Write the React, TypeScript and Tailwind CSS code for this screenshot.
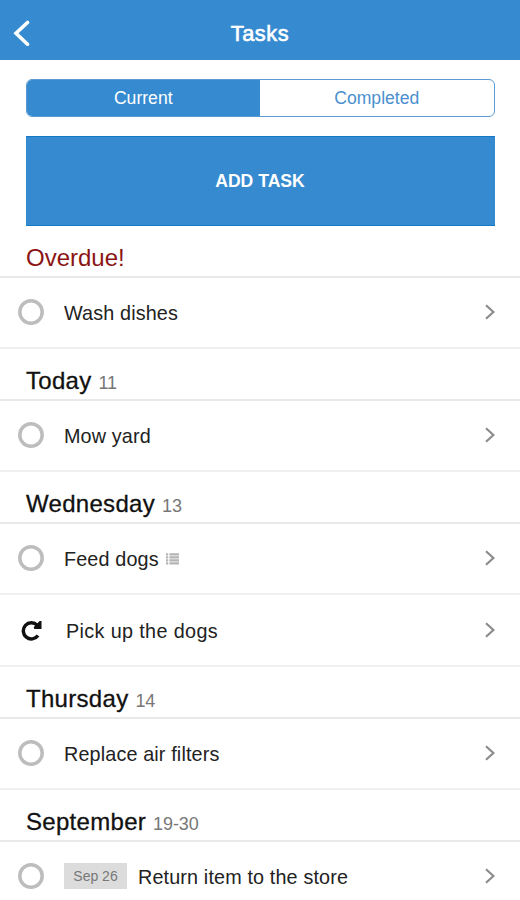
import clsx from "clsx";

type Task = {
  title: string;
  date?: string;
  hasList?: boolean;
  repeats?: boolean;
};

type Section = {
  title: string;
  days?: string;
  overdue?: boolean;
  tasks: Task[];
};

const sections: Section[] = [
  { title: "Overdue!", overdue: true, tasks: [{ title: "Wash dishes" }] },
  { title: "Today", days: "11", tasks: [{ title: "Mow yard" }] },
  {
    title: "Wednesday",
    days: "13",
    tasks: [
      { title: "Feed dogs", hasList: true },
      { title: "Pick up the dogs", repeats: true },
    ],
  },
  { title: "Thursday", days: "14", tasks: [{ title: "Replace air filters" }] },
  {
    title: "September",
    days: "19-30",
    tasks: [{ title: "Return item to the store", date: "Sep 26" }],
  },
];

function RepeatIcon() {
  return (
    <svg width="22" height="22" viewBox="0 0 22 22" fill="none">
      <path d="M17 16.6A8.1 8.1 0 1 1 16.2 6.2" stroke="#111" strokeWidth="3.4" />
      <path d="M20.5 2v8h-7.2l-.6-1.8L18.6 2z" fill="#111" />
    </svg>
  );
}

function ListIcon() {
  return (
    <svg width="13" height="12" viewBox="0 0 13 12" fill="none" stroke="#b4b4b4" strokeWidth="2.2">
      <path d="M0 1.4h2.2M0 4.4h2.2M0 7.4h2.2M0 10.4h2.2" />
      <path d="M3.4 1.4H13M3.4 4.4H13M3.4 7.4H13M3.4 10.4H13" />
    </svg>
  );
}

function TaskRow({ task }: { task: Task }) {
  return (
    <div
      className={clsx(
        "flex items-center border-b-2 border-[#efefef] pl-[18px] pr-6",
        task.repeats ? "h-[72px] pb-px" : "h-[71px] pb-[2px]"
      )}
    >
      {task.repeats ? (
        <div className="w-12 pl-[3px]">
          <RepeatIcon />
        </div>
      ) : (
        <svg className="mr-5" width="26" height="26" viewBox="0 0 26 26" fill="none">
          <circle cx="13" cy="13" r="11.2" stroke="#bdbdbd" strokeWidth="3.5" />
        </svg>
      )}
      {task.date && (
        <span className="mr-[11px] flex h-[26px] w-[63px] items-center justify-center bg-[#dcdcdc] text-sm text-[#777]">
          {task.date}
        </span>
      )}
      <span
        className={clsx(
          "pt-[3px] text-[19.8px] leading-6 text-[#222]",
          task.repeats ? "tracking-[0.36px]" : "tracking-[0.14px]"
        )}
      >
        {task.title}
      </span>
      {task.hasList && (
        <span className="ml-[7px] pt-[3px]">
          <ListIcon />
        </span>
      )}
      <svg className="ml-auto" width="12" height="18" viewBox="0 0 12 18" fill="none">
        <path d="M2 2.2 9.4 9 2 15.8" stroke="#8c8c8c" strokeWidth="2.2" />
      </svg>
    </div>
  );
}

export default function App() {
  return (
    <div className="flex h-[900px] w-[520px] flex-col overflow-hidden bg-white font-['Liberation_Sans',Arial,sans-serif]">
      <header className="grid h-[60px] shrink-0 grid-cols-[1fr_auto_1fr] items-center bg-[#368ad0] pt-[7px] text-white">
        <svg className="ml-3" width="20" height="28" viewBox="0 0 20 28" fill="none">
          <path d="M15.5 2.5 4 13.3l11.5 10.9" stroke="#fff" strokeWidth="3.6" strokeLinecap="round" />
        </svg>
        <h1 className="pt-px text-[21.8px] tracking-[0.6px] [-webkit-text-stroke:0.6px_white]">Tasks</h1>
      </header>

      <div className="px-[25.5px] pt-[19px]">
        <div className="grid h-[38px] grid-cols-2 overflow-hidden rounded-md border border-[#5b99d2] text-[17.6px]">
          <button className="bg-[#368ad0] text-white">Current</button>
          <button className="text-[#4a90d0]">Completed</button>
        </div>
        <button className="mt-[19px] h-[90px] w-full border-y border-[#1479c4] bg-[#368ad0] text-[17.6px] font-bold text-white">
          ADD TASK
        </button>
      </div>

      <main>
        {sections.map((section) => (
          <section key={section.title}>
            <h2
              className={clsx(
                "flex h-[52px] items-baseline border-b-2 border-[#e9e9e9] pl-[26px] pt-4 text-2xl leading-8",
                section.overdue
                  ? "text-[#8b1414]"
                  : "tracking-[0.3px] text-[#111] [-webkit-text-stroke:0.3px_#111]"
              )}
            >
              {section.title}
              {section.days && (
                <span className="ml-[7px] text-lg tracking-[-0.1px] text-[#777] [-webkit-text-stroke:0]">
                  {section.days}
                </span>
              )}
            </h2>
            {section.tasks.map((task) => (
              <TaskRow key={task.title} task={task} />
            ))}
          </section>
        ))}
      </main>
    </div>
  );
}
